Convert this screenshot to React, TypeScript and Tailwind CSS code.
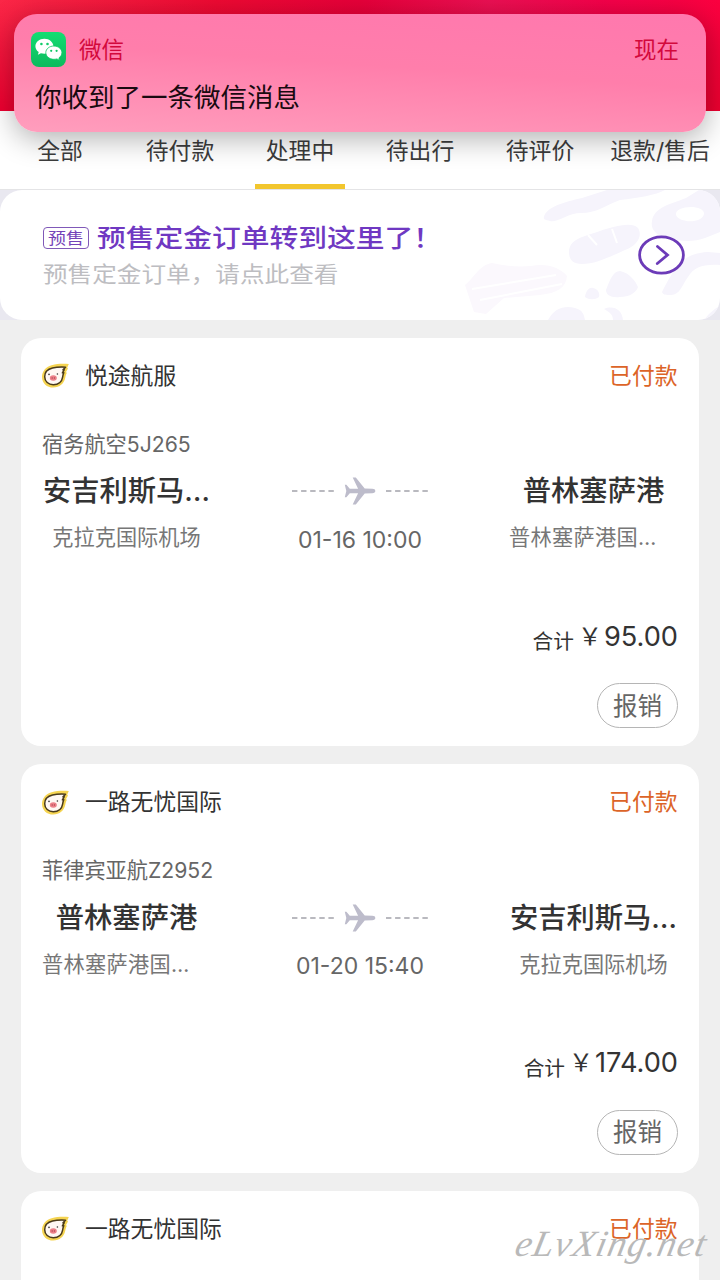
import clsx from "clsx";

type Stop = {
  city: string;
  airport: string;
};

type Trip = {
  flight: string;
  from: Stop;
  to: Stop;
  time: string;
  total: string;
};

type Order = {
  shop: string;
  trip?: Trip;
};

const tabs = ["全部", "待付款", "处理中", "待出行", "待评价", "退款/售后"];

const orders: Order[] = [
  {
    shop: "悦途航服",
    trip: {
      flight: "宿务航空5J265",
      from: { city: "安吉利斯马…", airport: "克拉克国际机场" },
      to: { city: "普林塞萨港", airport: "普林塞萨港国…" },
      time: "01-16 10:00",
      total: "95.00",
    },
  },
  {
    shop: "一路无忧国际",
    trip: {
      flight: "菲律宾亚航Z2952",
      from: { city: "普林塞萨港", airport: "普林塞萨港国…" },
      to: { city: "安吉利斯马…", airport: "克拉克国际机场" },
      time: "01-20 15:40",
      total: "174.00",
    },
  },
  { shop: "一路无忧国际" },
];

export default function App() {
  return (
    <div className="relative h-[1280px] w-[720px] overflow-hidden bg-[#efefef] font-['Inter','Noto_Sans_CJK_SC',sans-serif] text-[#333]">
      <header className="h-[111px] bg-[linear-gradient(90deg,#fb2747_0%,#ef0a33_30%,#e8003a_50%,#ec1054_68%,#f6004a_85%,#fb0040_100%)]">
        <div className="h-full bg-linear-to-b from-transparent to-[#ee0030]" />
      </header>
      <Tabs />
      <Banner />
      <main className="mt-[17.5px] flex flex-col gap-[18px] px-[21px]">
        {orders.map((order, index) => (
          <OrderCard key={index} order={order} />
        ))}
      </main>
      <Notification />
      <p className="absolute top-[1221px] left-[516px] origin-left -skew-x-12 font-['Liberation_Serif',serif] text-[37px] leading-[46px] tracking-[1.2px] whitespace-nowrap text-[#b9b9b9] italic">
        eLvXing.net
      </p>
    </div>
  );
}

function Tabs() {
  return (
    <nav className="flex h-[79px] border-b border-[#e4e4e6] bg-white">
      {tabs.map((tab) => (
        <div key={tab} className="flex w-[120px] flex-col items-center justify-between pt-[24px]">
          <span className="text-[22.8px] leading-[32px] whitespace-nowrap text-[#3c3c3c]">{tab}</span>
          <span className={clsx("h-[5px] w-[90px]", tab === "处理中" && "bg-[#f2c62e]")} />
        </div>
      ))}
    </nav>
  );
}

function Notification() {
  return (
    <section className="absolute top-[14px] left-[14px] h-[118px] w-[692px] rounded-[23px] bg-[linear-gradient(184deg,#ff78ae_0%,#ff7eab_45%,#ff9ebd_100%)] px-[17px] pt-[17px] shadow-[0_6px_30px_rgba(0,0,0,0.32)]">
      <div className="flex items-center">
        <WechatIcon />
        <span className="mt-px ml-[13px] text-[22.5px] leading-[35px] text-[#d3093c]">微信</span>
        <span className="mt-px mr-[10px] ml-auto text-[22.5px] leading-[35px] text-[#d3093c]">现在</span>
      </div>
      <p className="mt-[10px] ml-[4px] text-[26.5px] leading-[40px] text-[#190a10]">你收到了一条微信消息</p>
    </section>
  );
}

function Banner() {
  return (
    <section className="bg-[#e9e8f0]">
      <div className="relative flex h-[130px] items-center justify-between overflow-hidden rounded-[22px] bg-white pr-[35px] pl-[43px]">
        <BannerArt />
        <div className="relative h-[66px]">
          <div className="flex items-center">
            <span className="flex h-[22px] w-[46px] items-center justify-center rounded-[4px] border border-[#8059b8] text-[#7443b8]">
              <span className="scale-x-[1.12] text-[16px] leading-[20px] whitespace-nowrap">预售</span>
            </span>
            <span className="ml-[8px] origin-left scale-x-[1.15] text-[25px] leading-[32px] font-medium whitespace-nowrap text-[#6f38c2]">
              预售定金订单转到这里了！
            </span>
          </div>
          <p className="mt-[5px] origin-left scale-x-[1.14] text-[21.6px] leading-[30px] whitespace-nowrap text-[#bdbdc1]">
            预售定金订单，请点此查看
          </p>
        </div>
        <svg className="relative h-[40px] w-[47px]" viewBox="0 0 47 40" fill="none" stroke="#6c3bb8">
          <ellipse cx="23.5" cy="20" rx="21.9" ry="18.2" strokeWidth="2.8" />
          <path d="M19.5 11.5 29.5 20l-10.2 8.5" strokeWidth="2.8" strokeLinecap="round" />
        </svg>
      </div>
    </section>
  );
}

function BannerArt() {
  return (
    <svg className="absolute top-0 right-0 h-[130px] w-[300px]" viewBox="0 0 300 130" fill="#f6f4fc">
      <path d="M124 27c2-10 20-15 38-19L187 0h58c-9 5-27 8-45 10-16 6-23 13-39 13-13 0-24 10-31 8-5-1-7-2-6-4z" />
      <path fillRule="evenodd" d="M232 31c2-14 19-17 34-23L279 0h21v42c-10 4-19 9-33 9-18-1-38-5-35-20zm24-6c3 8 26 9 28-1 1-10-30-9-28 1z" />
      <path d="M149 62c0-12 13-15 25-19 19-7 38-12 44-5 5 8-1 18-13 22-18 8-30 14-43 14-9 0-13-4-13-12z" />
      <path d="m168 45 9 10m15-16 5 14" stroke="#fff" strokeWidth="2" />
      <path d="M45 95c10-8 14-20 27-22 13 3 25 4 39 3 17-3 29 2 36 10-1 12-10 17-27 19l-36 3-18 16-12-2z" fill="#fbf8fd" />
      <path d="m60 110 82-16M52 99l84-14" stroke="#fff" strokeWidth="2" />
      <path d="M186 100c4-10 7-19 14-19 9 2 15 9 18 16-2 6-9 10-18 10-9 1-14-2-14-7z" />
      <path d="M165 107c1-7 5-10 8-9 5 1 7 5 6 9-4 3-10 3-14 0z" />
      <path d="M128 130c6-12 17-15 27-12 8 2 9 7 10 12zM184 119c10-4 18 1 19 11h-10c0-6-4-8-9-11z" />
      <path d="M242 102c10-19 18-36 38-39 8-2 14 0 20 0v12c-17-1-26 2-32 12-6 8-8 18-17 18-5 0-8 0-9-3z" />
      <path d="M284 130c3-4 8-10 16-14v14z" />
    </svg>
  );
}

function OrderCard({ order }: { order: Order }) {
  return (
    <article className="flex h-[408.5px] shrink-0 flex-col rounded-[20px] bg-white px-[21px] pt-[20.5px]">
      <div className="flex h-[36px] items-center text-[22.8px]">
        <PigLogo />
        <span className="ml-[15px]">{order.shop}</span>
        <span className="mr-[0.5px] ml-auto text-[#dc6428]">已付款</span>
      </div>
      {order.trip ? <TripDetails trip={order.trip} /> : null}
    </article>
  );
}

function TripDetails({ trip }: { trip: Trip }) {
  return (
    <>
      <p className="mt-[33.5px] text-[21.2px] leading-[32px] text-[#666]">{trip.flight}</p>
      <div className="mt-[9.5px] flex justify-between">
        <StopColumn stop={trip.from} />
        <div className="flex flex-col items-center">
          <div className="flex h-[44px] items-center gap-[10px]">
            <Dashes />
            <PlaneIcon />
            <Dashes />
          </div>
          <span className="mt-[11.5px] text-[23px] leading-[30px] text-[#666]">{trip.time}</span>
        </div>
        <StopColumn stop={trip.to} />
      </div>
      <div className="mt-[56.5px] flex items-center justify-end leading-[40px]">
        <span className="mt-[11px] text-[20.7px]">合计</span>
        <span className="mr-[2px] ml-[4px] text-[24px]">￥</span>
        <span className="text-[27.2px]">{trip.total}</span>
      </div>
      <button className="mt-[21px] h-[45px] w-[81px] shrink-0 self-end rounded-full border border-[#b5b5b5] text-[24.5px] leading-[42px] text-[#666]">
        报销
      </button>
    </>
  );
}

function StopColumn({ stop }: { stop: Stop }) {
  return (
    <div className="flex w-[169px] flex-col items-center whitespace-nowrap">
      <span className="text-[28.3px] leading-[44px] font-medium">{stop.city}</span>
      <span className={clsx("mt-[9px] text-[21.2px] leading-[30px] text-[#777]", stop.airport.endsWith("…") && "self-start tracking-[0.3px]")}>
        {stop.airport}
      </span>
    </div>
  );
}

function Dashes() {
  return (
    <svg className="h-[2px] w-[42px]" viewBox="0 0 42 2">
      <path d="M0 1h42" stroke="#b9b9bf" strokeWidth="1.8" strokeDasharray="5.4 3.7" />
    </svg>
  );
}

function PlaneIcon() {
  return (
    <svg className="h-[30px] w-[32px]" viewBox="0 0 32 30" fill="#bdbccb">
      <path d="M.8 8.800h1.600l3.400 4h8.300L8.700 1.400h3.100l8.900 11.200 7.600.2c1.900 0 3 .9 3 2.200s-1.100 2.200-3 2.200l-7.600.2-8.900 11.200H8.700l5.400-11.400H5.800l-3.400 4H.8L2.300 15z" />
    </svg>
  );
}

// Round pig face inside a flame that trails to the upper right
function PigLogo() {
  return (
    <svg className="-ml-px h-[26px] w-[29px]" viewBox="0 0 29 26">
      <path d="M27.800 1c-5.400-.5-11.600-.4-17.200 1.200C4.500 4 1 8.600 1 13.900c0 6.200 5 10.600 11.200 10.600 6.500 0 10.800-3.900 12-9.500.4-2 .8-3.600 1.700-5.200l-1-.5L27 5.400l-.8-.6z" fill="#f5d451" />
      <path d="M24.500 4.200c-4.700-.3-9-.1-13 .9C6.700 6.300 3.700 9.500 3.700 13.700c0 4.800 3.800 8.100 8.600 8.100 5.200 0 8.700-3.200 9.300-7.600.3-2 .5-3.300 1.200-4.600l-1.400.2 1.900-3.200-1.300.2z" fill="#fff8f3" stroke="#4a3b1b" strokeWidth="1.500" strokeLinejoin="round" />
      <circle cx="8" cy="11.400" r=".8" fill="#333" />
      <circle cx="16.400" cy="11" r=".8" fill="#333" />
      <ellipse cx="12.300" cy="15" rx="3.500" ry="2.700" fill="#ec8088" />
      <path d="M11.200 14.300v1.400M13.400 14.300v1.400" stroke="#a33d48" strokeWidth=".9" />
    </svg>
  );
}

function WechatIcon() {
  return (
    <svg className="h-[35px] w-[35px]" viewBox="0 0 35 35">
      <defs>
        <linearGradient id="wechat" x1="0" y1="0" x2="0" y2="1">
          <stop offset="0" stopColor="#13dd72" />
          <stop offset="1" stopColor="#0cba5d" />
        </linearGradient>
      </defs>
      <rect width="35" height="35" rx="8" fill="url(#wechat)" />
      <path d="M13.400 6.700c-5 0-9 3.400-9 7.600 0 2.400 1.300 4.400 3.300 5.800l-.8 2.700 3-1.600c1.100.3 2.300.5 3.500.5 5 0 9-3.300 9-7.400s-4-7.600-9-7.600z" fill="#fff" />
      <circle cx="10.400" cy="12" r="1.300" fill="#10cd69" />
      <circle cx="16.500" cy="12" r="1.300" fill="#10cd69" />
      <path d="M22.900 14c-4.500 0-8.100 2.900-8.100 6.600s3.600 6.700 8.100 6.700c1 0 2.100-.2 3-.4l2.600 1.300-.6-2.300c1.800-1.200 3-3.100 3-5.300 0-3.700-3.600-6.600-8-6.600z" fill="#fff" stroke="#0fc864" strokeWidth=".8" />
      <circle cx="20.200" cy="18.800" r="1.100" fill="#0fc864" />
      <circle cx="25.600" cy="18.800" r="1.100" fill="#0fc864" />
    </svg>
  );
}
